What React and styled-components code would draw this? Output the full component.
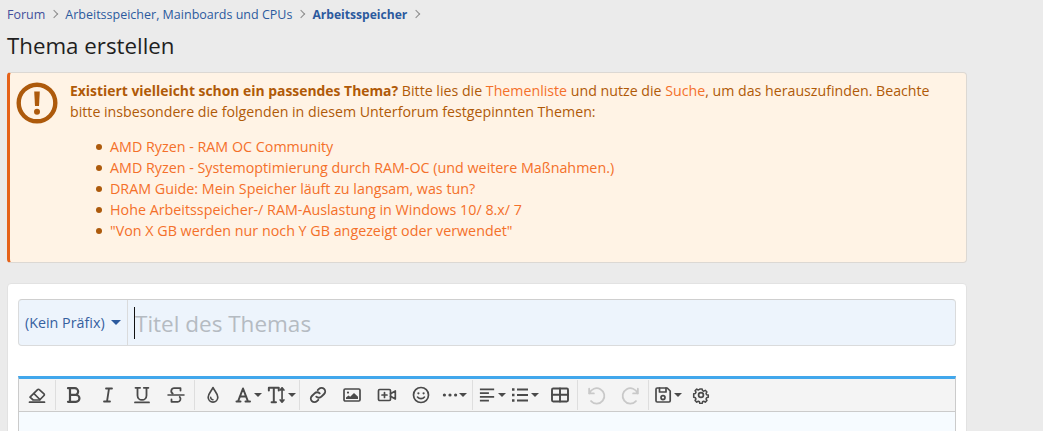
import React from 'react'
import styled, { createGlobalStyle } from 'styled-components'

const FONT = `"Open Sans", "Noto Sans", "Liberation Sans", sans-serif`

const GlobalStyle = createGlobalStyle`
  html, body {
    margin: 0;
    height: 431px;
    overflow: hidden;
    background: #ebebeb;
    font-family: ${FONT};
  }
`

const Icon = ({ children, size = 20, fill = 'none', sw = 1.5 }) => (
  <svg width={size} height={size} viewBox="0 0 20 20" fill={fill} stroke="currentColor" strokeWidth={sw} strokeLinecap="round" strokeLinejoin="round">
    {children}
  </svg>
)

const toolbar = [
  { w: 36, items: [{ w: 36, icon: <Icon><path d="M3 12.2 10.6 4.6a1.2 1.2 0 0 1 1.7 0l4.7 4.2a1.2 1.2 0 0 1 0 1.7L12.6 15H6.2Z" strokeWidth="1.7" /><path d="M7 8.6 13 14.6" /><path d="M2.5 17.2h15" strokeWidth="1.7" /></Icon> }] },
  { w: 137, pad: 1, items: [
    { w: 34, icon: <Icon><path d="M4 3.2h6.8a3.300 3.300 0 0 1 0 6.700H6M6 9.900h6a3.400 3.400 0 0 1 0 6.900H4M6 3.200v13.600" strokeWidth="2.200" /></Icon> },
    { w: 34, icon: <Icon><path d="M8 3.500h6M6 16.500h6M11 3.500 9 16.500" strokeWidth="1.800" /></Icon> },
    { w: 34, icon: <Icon><path d="M3.500 2.800h4.600M11.800 2.800h4.600M5.500 2.800v7.600a4.500 4.500 0 0 0 9 0V2.800" strokeWidth="1.800" /><path d="M3 17.400h14" strokeWidth="1.800" /></Icon> },
    { w: 34, icon: <Icon><path d="M2 10h16" /><path d="M14.500 5.500V3.200H8.200a2.900 2.900 0 0 0-1.500 5.400M5.500 14.500v2.300h6.300a2.900 2.900 0 0 0 1.900-4.900" strokeWidth="1.800" /></Icon> },
  ] },
  { w: 103, pad: 1, items: [
    { w: 34, icon: <Icon><path d="M10 2.500c1 3 4.800 6 4.800 9.800a4.800 4.800 0 0 1-9.600 0C5.200 8.500 9 5.500 10 2.500Z" strokeWidth="1.700" /><path d="M7.700 12.300a2.300 2.300 0 0 0 2.300 2.400" /></Icon> },
    { w: 32, nudge: 2, caret: true, icon: <Icon><path d="M3.500 16.500h4M12.500 16.500h4.500M5 16.500 10 3.500l5 13M6.800 11.500h6.400" strokeWidth="2" /></Icon> },
    { w: 36, caret: true, icon: <Icon size={22}><path d="M3.500 6V3.500h9V6M8 3.500v13M6 16.500h4" strokeWidth="1.800" /><path d="M15.500 3.500v13M13.800 5.500l1.700-2 1.700 2M13.800 14.500l1.700 2 1.700-2" /></Icon> },
  ] },
  { w: 171, pad: 1, items: [
    { w: 34, icon: <Icon><path d="M8.300 11.700a3.600 3.600 0 0 0 5.100 0l2.700-2.700a3.600 3.600 0 0 0-5.100-5.100L9.700 5.200" strokeWidth="1.900" /><path d="M11.700 8.300a3.600 3.600 0 0 0-5.100 0L3.900 11a3.600 3.600 0 0 0 5.100 5.100l1.300-1.300" strokeWidth="1.900" /></Icon> },
    { w: 34, icon: <Icon><rect x="2" y="4" width="16" height="12" rx="1.200" strokeWidth="1.700" /><circle cx="6" cy="7.600" r="1.100" fill="currentColor" stroke="none" /><path d="M4 14v-1.500l2.500-2 1.700 1.300 3.800-3.800 4 3.800V14Z" fill="currentColor" stroke="none" /></Icon> },
    { w: 35, icon: <Icon><rect x="1.500" y="4.500" width="12" height="11" rx="1.200" strokeWidth="1.700" /><path d="M7.500 7.500v5M5 10h5" strokeWidth="1.700" /><path d="M13.500 8.700 18.300 6v8l-4.800-2.700" strokeWidth="1.700" /></Icon> },
    { w: 34, icon: <Icon><circle cx="10" cy="10" r="7.500" strokeWidth="1.700" /><circle cx="7.400" cy="8.300" r="1.100" fill="currentColor" stroke="none" /><circle cx="12.600" cy="8.300" r="1.100" fill="currentColor" stroke="none" /><path d="M6.500 12a4.500 4.500 0 0 0 7 0" strokeWidth="1.600" /></Icon> },
    { w: 33, caret: true, icon: <Icon size={16}><circle cx="3" cy="10" r="2" fill="currentColor" stroke="none" /><circle cx="10" cy="10" r="2" fill="currentColor" stroke="none" /><circle cx="17" cy="10" r="2" fill="currentColor" stroke="none" /></Icon> },
  ] },
  { w: 103, pad: 1, items: [
    { w: 32, nudge: 4, caret: true, icon: <Icon sw={1.900}><path d="M2 4h15M2 8h9.500M2 12h15M2 16h9.500" strokeLinecap="butt" /></Icon> },
    { w: 37, caret: true, icon: <Icon sw={1.900}><path d="M7 4.500h11M7 10h11M7 15.500h11" strokeLinecap="butt" /><path d="M2 4.500h2.500M2 10h2.500M2 15.500h2.500" strokeWidth="2.600" strokeLinecap="butt" /></Icon> },
    { w: 33, icon: <Icon sw={1.900}><rect x="2" y="3.500" width="16" height="13" rx="1.200" /><path d="M2 9.800h16M10 3.500v13" /></Icon> },
  ] },
  { w: 69, pad: 1, muted: true, items: [
    { w: 34, icon: <Icon size={21} sw={1.700}><path d="M3 3.500V8h4.500" /><path d="M3.300 8a7.300 7.300 0 1 1 1.500 7.300" /></Icon> },
    { w: 34, icon: <Icon size={21} sw={1.700}><path d="M17 3.500V8h-4.500" /><path d="M16.700 8a7.300 7.300 0 1 0-1.500 7.300" /></Icon> },
  ] },
  { w: 69, last: true, items: [
    { w: 35, nudge: 2, caret: true, icon: <Icon sw={1.700}><path d="M3 4.200A1.200 1.200 0 0 1 4.200 3h10l3 3v9.800a1.200 1.200 0 0 1-1.200 1.200H4.200A1.200 1.200 0 0 1 3 15.800Z" /><path d="M6.500 3v4h6.500V3" /><circle cx="10" cy="12.600" r="2" /></Icon> },
    { w: 34, icon: <Icon size={18} sw={1.900}><circle cx="10" cy="10" r="2.700" /><path d="M8.600 2.500h2.800l.5 2.100 1.500.7 1.900-1.100 2 2-1.100 1.900.7 1.500 2.100.5v2.800l-2.100.5-.7 1.500 1.100 1.900-2 2-1.900-1.100-1.500.7-.5 2.100H8.600l-.5-2.100-1.500-.7-1.900 1.100-2-2 1.100-1.900-.7-1.500-2.100-.5V8.600l2.100-.5.700-1.500-1.100-1.900 2-2 1.900 1.100 1.500-.7Z" transform="translate(1 1) scale(.9)" /></Icon> },
  ] },
]

const threads = [
  'AMD Ryzen - RAM OC Community',
  'AMD Ryzen - Systemoptimierung durch RAM-OC (und weitere Maßnahmen.)',
  'DRAM Guide: Mein Speicher läuft zu langsam, was tun?',
  'Hohe Arbeitsspeicher-/ RAM-Auslastung in Windows 10/ 8.x/ 7',
  '"Von X GB werden nur noch Y GB angezeigt oder verwendet"',
]

const App = () => (
  <Page>
    <GlobalStyle />
    <Breadcrumbs>
      <Crumb $visited>Forum</Crumb>
      <Chevron />
      <Crumb>Arbeitsspeicher, Mainboards und CPUs</Crumb>
      <Chevron />
      <Crumb $current>Arbeitsspeicher</Crumb>
      <Chevron />
    </Breadcrumbs>
    <Title>Thema erstellen</Title>
    <Notice>
      <NoticeIcon>
        <svg width="42" height="42" viewBox="0 0 42 42">
          <circle cx="21" cy="21" r="18.300" fill="none" stroke="currentColor" strokeWidth="4.400" />
          <path d="M18.200 9.500h5.600l-.8 14.500h-4Z" fill="currentColor" />
          <circle cx="21" cy="29.800" r="3" fill="currentColor" />
        </svg>
      </NoticeIcon>
      <NoticeBody>
        <NoticeText>
          <strong>Existiert vielleicht schon ein passendes Thema?</strong> Bitte lies die <NoticeLink>Themenliste</NoticeLink> und nutze die <NoticeLink>Suche</NoticeLink>, um das herauszufinden. Beachte bitte insbesondere die folgenden in diesem Unterforum festgepinnten Themen:
        </NoticeText>
        <ThreadList>
          {threads.map(t => (
            <li key={t}><NoticeLink>{t}</NoticeLink></li>
          ))}
        </ThreadList>
      </NoticeBody>
    </Notice>
    <FormBlock>
      <TitleRow>
        <PrefixSelect>(Kein Präfix) <PrefixCaret /></PrefixSelect>
        <TitleField>
          <TextCaret />
          <TitleInput placeholder="Titel des Themas" readOnly />
        </TitleField>
      </TitleRow>
      <Editor>
        <Toolbar>
          {toolbar.map((g, i) => (
            <ToolGroup key={i} $w={g.w} $pad={g.pad} $muted={g.muted} $last={g.last}>
              {g.items.map((b, j) => (
                <ToolButton key={j} $w={b.w} $nudge={b.nudge}>
                  {b.icon}
                  {b.caret && <ToolCaret />}
                </ToolButton>
              ))}
            </ToolGroup>
          ))}
        </Toolbar>
        <EditorArea />
      </Editor>
    </FormBlock>
  </Page>
)

export default App

const Page = styled.div`
  width: 960px;
  height: 431px;
  padding: 6px 0 0 7px;
  overflow: hidden;
  box-sizing: content-box;
`

const Breadcrumbs = styled.div`
  display: flex;
  align-items: center;
  height: 16px;
  font-size: 12.5px;
`

const Crumb = styled.span`
  color: ${props => (props.$visited ? '#43509b' : '#2c5a9e')};
  font-weight: ${props => (props.$current ? 700 : 400)};
  font-size: ${props => (props.$current ? '12.1px' : '12.5px')};
`

const Chevron = styled.span`
  width: 5px;
  height: 5px;
  margin: 0 8px 0 6px;
  border-top: 1.4px solid #8c8c8c;
  border-right: 1.4px solid #8c8c8c;
  transform: rotate(45deg);
`

const Title = styled.h1`
  margin: 11px 0 0;
  height: 39px;
  font-size: 22.3px;
  line-height: 26px;
  font-weight: 400;
  color: #1f1f1f;
`

const Notice = styled.div`
  display: flex;
  height: 191px;
  box-sizing: border-box;
  background: #fff3e5;
  border: 1px solid #dcd8d3;
  border-left: 3px solid #e5631a;
  border-radius: 4px;
  color: #b05a08;
`

const NoticeIcon = styled.div`
  flex: none;
  width: 60px;
  padding: 9px 0 0 6px;
  box-sizing: border-box;
  color: #ad5a0c;
`

const NoticeBody = styled.div`
  flex: 1;
  padding: 7px 30px 0 0;
`

const NoticeText = styled.div`
  font-size: 14.2px;
  line-height: 21px;

  strong {
    font-size: 13.9px;
    font-weight: 700;
  }
`

const NoticeLink = styled.span`
  color: #f4702a;
`

const ThreadList = styled.ul`
  margin: 14px 0 0;
  padding: 0 0 0 40px;
  list-style: none;
  font-size: 14.3px;
  line-height: 21px;

  li {
    position: relative;
  }

  li::before {
    content: '';
    position: absolute;
    left: -14px;
    top: 8px;
    width: 6px;
    height: 6px;
    border-radius: 50%;
    background: #ad5a0c;
  }
`

const FormBlock = styled.div`
  margin-top: 20px;
  height: 300px;
  padding: 15px 10px 0;
  box-sizing: border-box;
  background: #fff;
  border: 1px solid #e2e2e2;
  border-radius: 4px;
`

const TitleRow = styled.div`
  display: flex;
  height: 47px;
  box-sizing: border-box;
  background: #edf4fc;
  border: 1px solid #dadbdc;
  border-top-color: #cfcfcf;
  border-radius: 4px;
`

const PrefixSelect = styled.div`
  display: flex;
  align-items: center;
  flex: none;
  width: 109px;
  padding-left: 6px;
  box-sizing: border-box;
  border-right: 1px solid #dadbdc;
  font-size: 14.3px;
  color: #35609f;
  white-space: pre;
`

const PrefixCaret = styled.span`
  width: 0;
  height: 0;
  margin-left: 3px;
  border-left: 5px solid transparent;
  border-right: 5px solid transparent;
  border-top: 5px solid #2c5a9e;
`

const TitleField = styled.div`
  flex: 1;
  display: flex;
  align-items: center;
  padding-left: 6px;
`

const TextCaret = styled.span`
  flex: none;
  width: 1px;
  height: 32px;
  background: #111;
`

const TitleInput = styled.input`
  flex: 1;
  border: 0;
  outline: 0;
  padding: 2px 0 0;
  background: transparent;
  font-family: ${FONT};
  font-size: 22.5px;

  &::placeholder {
    color: #b5bbc2;
    opacity: 1;
  }
`

const Editor = styled.div`
  margin-top: 30px;
  border: 1px solid #cbcbcb;
  border-top: 3px solid #41a7ec;
`

const Toolbar = styled.div`
  display: flex;
  align-items: center;
  height: 33px;
  padding: 1px 0;
  box-sizing: border-box;
  background: #f4f4f4;
  border-bottom: 1px solid #cbcbcb;
`

const ToolGroup = styled.div`
  display: flex;
  flex: none;
  width: ${props => props.$w}px;
  height: 30px;
  padding-left: ${props => props.$pad || 0}px;
  box-sizing: content-box;
  border-right: ${props => (props.$last ? '0' : '1px solid #dedede')};
  color: ${props => (props.$muted ? '#c9c9c9' : '#4a4a4a')};
`

const ToolButton = styled.div`
  display: flex;
  align-items: center;
  justify-content: center;
  flex: none;
  width: ${props => props.$w}px;
  padding-left: ${props => props.$nudge || 0}px;
  box-sizing: border-box;
`

const ToolCaret = styled.span`
  flex: none;
  width: 0;
  height: 0;
  margin-left: 1px;
  border-left: 4px solid transparent;
  border-right: 4px solid transparent;
  border-top: 4px solid currentColor;
`

const EditorArea = styled.div`
  height: 60px;
  background: #f6fbff;
`
